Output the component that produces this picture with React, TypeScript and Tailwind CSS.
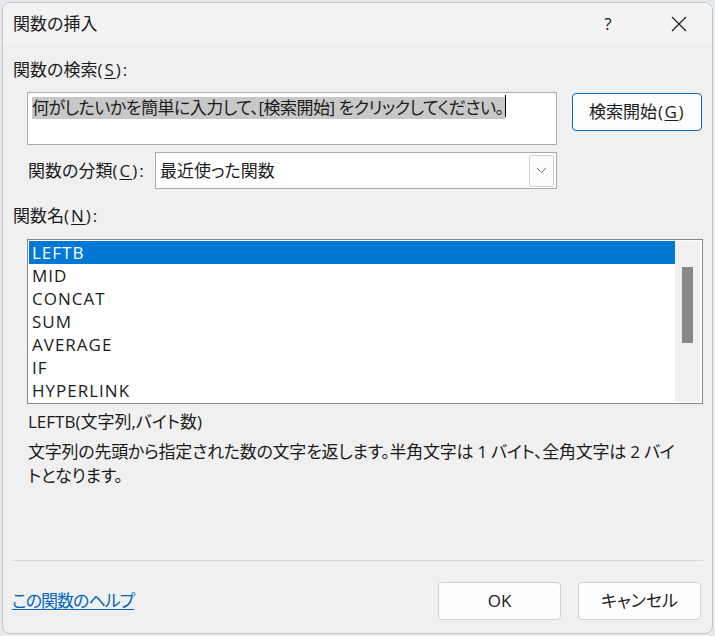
export default function App() {
  const rows = ["LEFTB", "MID", "CONCAT", "SUM", "AVERAGE", "IF", "HYPERLINK"];
  return (
    <div className="w-[715px] h-[636px] bg-[#e6e9ee] overflow-hidden font-['Open_Sans','Noto_Sans_CJK_JP',sans-serif] text-[17px] text-[#1b1b1b] [font-feature-settings:'palt']">
      <div className="ml-[2px] mt-[2px] w-[711px] h-[632px] rounded-[8px] border border-[#c4c4c4] bg-[#f0f0f0] overflow-hidden flex flex-col">
        {/* title bar */}
        <div className="h-[41px] shrink-0 bg-[#f3f3f3] flex items-center">
          <div className="pl-[10px] flex-1 leading-[20px] pt-[1px]">関数の挿入</div>
          <div className="w-[46px] h-full flex items-center justify-center leading-none">?</div>
          <div className="ml-[25px] mr-[10px] w-[46px] h-full flex items-center justify-center">
            <svg width="16" height="16" viewBox="0 0 16 16">
              <path d="M1 1 L15 15 M15 1 L1 15" stroke="#1b1b1b" strokeWidth="1.2" fill="none" />
            </svg>
          </div>
        </div>

        {/* body */}
        <div className="flex flex-col pl-[10px]">
          <div className="mt-[16px] leading-[20px]">
            関数の検索<span className="tracking-[2px]">(<span className="underline underline-offset-2">S</span>):</span>
          </div>

          <div className="mt-[12px] flex items-start">
            <div className="ml-[14px] w-[530px] h-[53px] border border-[#ababab] bg-white pl-[4px] pt-[2px]">
              <span className="bg-[#c8c8c8] leading-[22px] inline-block pr-[1px] tracking-[-0.5px]">
                何がしたいかを簡単に入力して、[検索開始] をクリックしてください。
              </span>
              <span className="inline-block w-[1px] h-[22px] bg-black align-top" />
            </div>
            <div className="ml-[15px] mt-[1px] w-[130px] h-[38px] border border-[#0067c0] rounded-[4px] bg-[#fdfdfd] flex items-center justify-center">
              検索開始<span className="tracking-[1.5px] ml-[1px]">(<span className="underline underline-offset-2">G</span>)</span>
            </div>
          </div>

          <div className="mt-[7px] flex items-center h-[37px]">
            <div className="ml-[15px] w-[127px] leading-[20px]">
              関数の分類<span className="tracking-[2px]">(<span className="underline underline-offset-2">C</span>):</span>
            </div>
            <div className="w-[402px] h-[37px] border border-[#ababab] bg-white flex items-center pl-[4px] pr-[2px]">
              <div className="flex-1">最近使った関数</div>
              <div className="w-[25px] h-[32px] border border-[#d2d2d2] rounded-[2px] bg-[#fbfbfb] flex items-center justify-center">
                <svg width="11" height="7" viewBox="0 0 11 7">
                  <path d="M1 1 L5.5 5.5 L10 1" stroke="#6a6a6a" strokeWidth="1" fill="none" />
                </svg>
              </div>
            </div>
          </div>

          <div className="mt-[17px] leading-[20px]">
            関数名<span className="tracking-[2px]">(<span className="underline underline-offset-2">N</span>):</span>
          </div>

          <div className="mt-[13px] ml-[14px] w-[676px] h-[165px] border border-[#828790] bg-white p-[1px] flex">
            <div className="w-[646px] flex flex-col">
              {rows.map((r, i) => (
                <div
                  key={r}
                  className={
                    i === 0
                      ? "h-[23px] pl-[3px] leading-[23px] tracking-[1px] bg-[#0078d4] text-white"
                      : "h-[23px] pl-[3px] leading-[23px] tracking-[1px]"
                  }
                >
                  {r}
                </div>
              ))}
            </div>
            <div className="w-[25px] h-full bg-[#f0f0f0] flex flex-col items-center">
              <div className="mt-[26px] w-[11px] h-[76px] bg-[#888888]" />
            </div>
          </div>

          <div className="mt-[8px] ml-[15px] leading-[20px]">LEFTB(文字列,バイト数)</div>
          <div className="mt-[8px] ml-[15px] leading-[24px] tracking-[-0.25px]">
            <div>文字列の先頭から指定された数の文字を返します。半角文字は 1 バイト、全角文字は 2 バイ</div>
            <div>トとなります。</div>
          </div>

          <div className="mt-[72px] ml-[-1px] w-[691px] h-[1px] bg-[#dadada]" />

          <div className="mt-[21px] flex items-center h-[38px]">
            <div className="ml-[-1px] text-[#0067c0] underline underline-offset-2 leading-[20px] tracking-[-1px]">この関数のヘルプ</div>
            <div className="ml-auto mr-[11px] flex gap-[17px]">
              <div className="w-[123px] h-[38px] border border-[#d0d0d0] rounded-[4px] bg-[#fdfdfd] flex items-center justify-center">
                OK
              </div>
              <div className="w-[123px] h-[38px] border border-[#d0d0d0] rounded-[4px] bg-[#fdfdfd] flex items-center justify-center">
                キャンセル
              </div>
            </div>
          </div>
        </div>
      </div>
    </div>
  );
}
